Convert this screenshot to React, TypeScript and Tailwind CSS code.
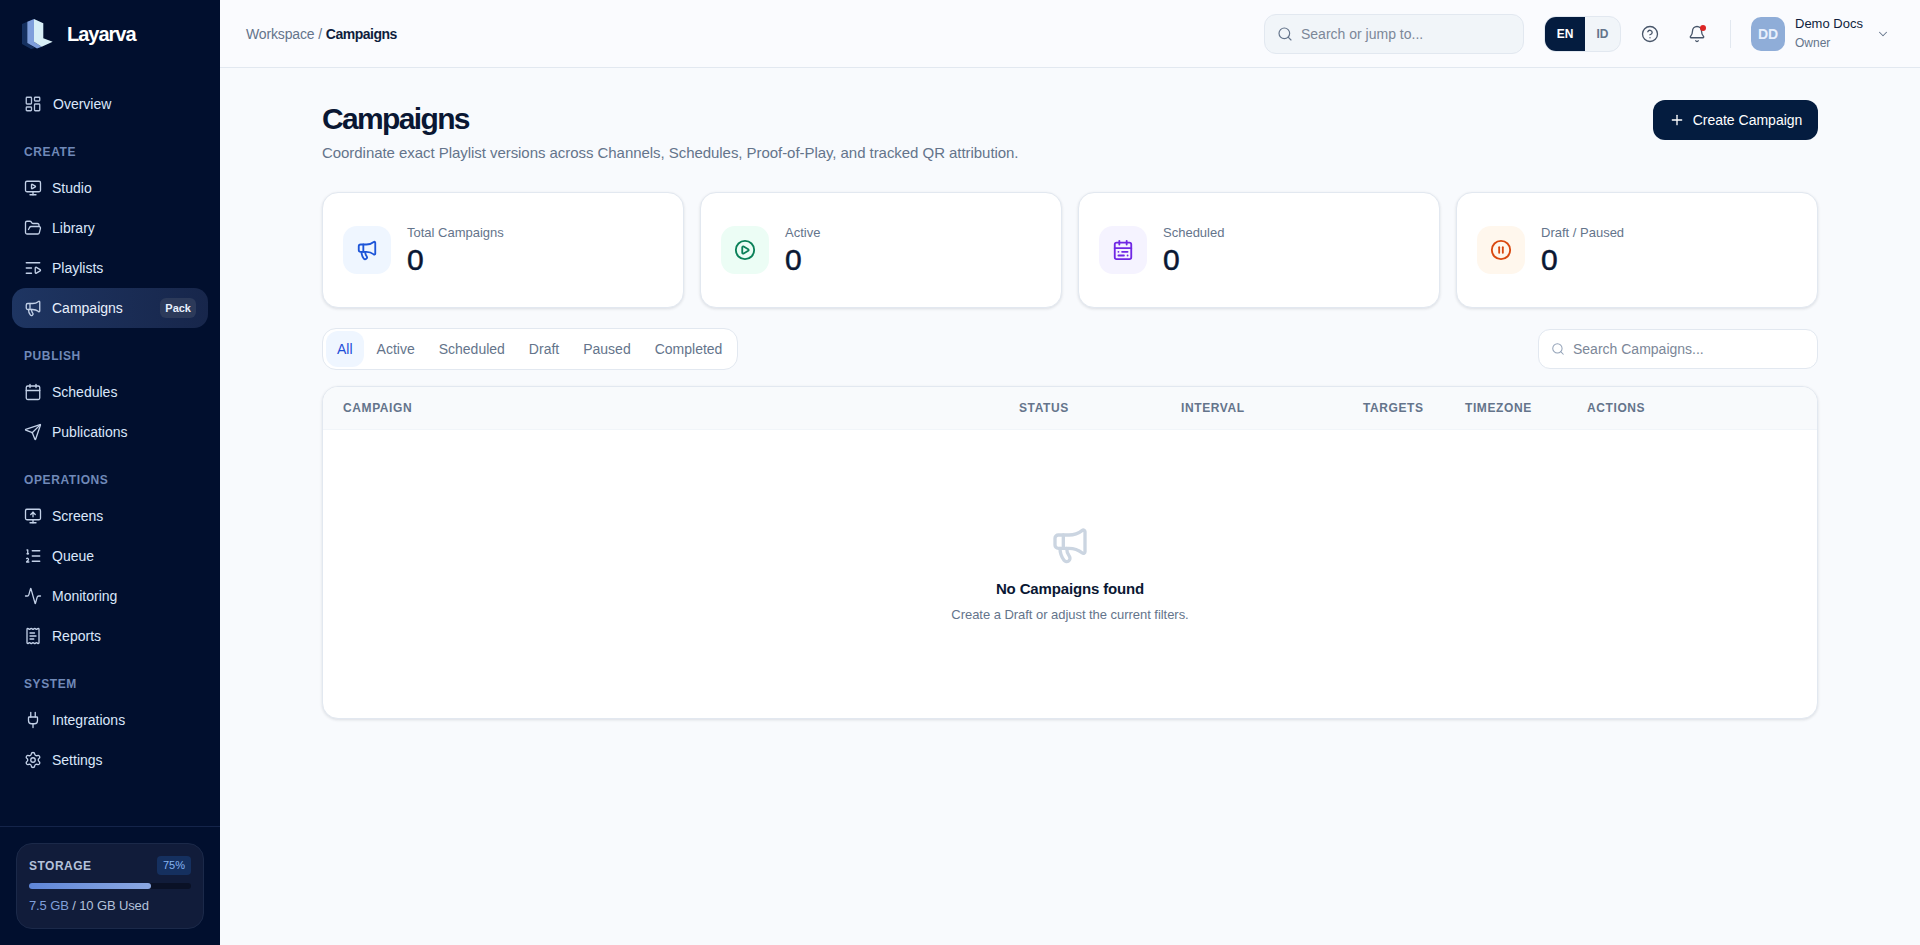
import React from 'react';
import {
  Activity,
  Bell,
  CalendarRange,
  Calendar,
  ChevronDown,
  CircleHelp,
  CirclePause,
  CirclePlay,
  FolderOpen,
  LayoutDashboard,
  ListOrdered,
  ListVideo,
  Megaphone,
  MonitorPlay,
  MonitorUp,
  Plug,
  Plus,
  ReceiptText,
  Search,
  Send,
  Settings,
} from 'lucide-react';

const navGroups = [
  {
    label: 'CREATE',
    items: [
      { name: 'Studio', icon: MonitorPlay },
      { name: 'Library', icon: FolderOpen },
      { name: 'Playlists', icon: ListVideo },
      { name: 'Campaigns', icon: Megaphone, active: true },
    ],
  },
  {
    label: 'PUBLISH',
    items: [
      { name: 'Schedules', icon: Calendar },
      { name: 'Publications', icon: Send },
    ],
  },
  {
    label: 'OPERATIONS',
    items: [
      { name: 'Screens', icon: MonitorUp },
      { name: 'Queue', icon: ListOrdered },
      { name: 'Monitoring', icon: Activity },
      { name: 'Reports', icon: ReceiptText },
    ],
  },
  {
    label: 'SYSTEM',
    items: [
      { name: 'Integrations', icon: Plug },
      { name: 'Settings', icon: Settings },
    ],
  },
];

const stats = [
  { label: 'Total Campaigns', icon: Megaphone, box: 'bg-[#eff6ff]', color: 'text-[#1d55d8]' },
  { label: 'Active', icon: CirclePlay, box: 'bg-[#ecfdf5]', color: 'text-[#0a8058]' },
  { label: 'Scheduled', icon: CalendarRange, box: 'bg-[#f5f3ff]', color: 'text-[#7028e4]' },
  { label: 'Draft / Paused', icon: CirclePause, box: 'bg-[#fff7ed]', color: 'text-[#d9480f]' },
];

const tabs = ['Active', 'Scheduled', 'Draft', 'Paused', 'Completed'];
const columns = ['CAMPAIGN', 'STATUS', 'INTERVAL', 'TARGETS', 'TIMEZONE', 'ACTIONS'];

function Logo() {
  return (
    <svg width="32" height="32" viewBox="0 0 32 32" className="shrink-0">
      <polygon points="0,6 5.3,3.7 5.3,25 13,30 9,31 0,26" fill="#15305f" />
      <polygon points="5.3,3.7 12,1 12,23.7 19.7,28.7 15,30.5 5.3,25" fill="#7f9fdc" />
      <polygon points="12,1 21.3,5.3 21.3,20.3 30.7,23.7 19.7,28.7 12,23.7" fill="#d8eff7" />
    </svg>
  );
}

function Sidebar() {
  return (
    <aside className="flex h-full w-[220px] shrink-0 flex-col bg-[#010f2e]">
      <div className="flex h-[68px] items-center gap-[13px] pl-[22px]">
        <Logo />
        <span className="text-[20px] font-bold tracking-[-0.05em] text-white">Layarva</span>
      </div>
      <nav className="flex flex-col px-3 pt-4">
        <a className="flex h-10 items-center gap-[11px] pl-3 text-sm text-[#dbe7fb]">
          <LayoutDashboard size={18} strokeWidth={1.75} className="text-[#b8c6de]" />
          Overview
        </a>
        {navGroups.map(group => (
          <div key={group.label}>
            <div className="h-11 pl-3 pt-5 pb-2 text-xs leading-4 font-bold tracking-[0.05em] text-[#7089b8]">
              {group.label}
            </div>
            {group.items.map(item => (
              <a
                key={item.name}
                className={
                  item.active
                    ? 'flex h-10 items-center gap-[10px] rounded-[14px] bg-gradient-to-r from-[#1e3562] to-[#17264b] pl-3 pr-3 text-sm text-[#e8f0fd]'
                    : 'flex h-10 items-center gap-[10px] pl-3 pr-3 text-sm text-[#dbe7fb]'
                }
              >
                <item.icon size={18} strokeWidth={1.75} className="text-[#c3d1e8]" />
                {item.name}
                {item.active && (
                  <span className="ml-auto rounded-md bg-[#2c3a5a] px-[5px] py-[3px] text-[11px] leading-[14px] font-bold text-[#e8f0fd]">
                    Pack
                  </span>
                )}
              </a>
            ))}
          </div>
        ))}
      </nav>
      <div className="mt-auto border-t border-[#14244a] px-4 pt-4 pb-[16px]">
        <div className="h-[86px] rounded-2xl border border-[#1b2949] bg-[#111c3a] px-3 pt-3">
          <div className="flex items-center justify-between">
            <span className="text-xs font-bold tracking-[0.04em] text-[#b4c2da]">STORAGE</span>
            <span className="rounded bg-[#15305f] px-[6px] py-[2px] text-[11px] leading-[15px] text-[#86b4f2]">75%</span>
          </div>
          <div className="mt-2 h-[6px] rounded-full bg-[#0a1126]">
            <div className="h-full w-3/4 rounded-full bg-gradient-to-r from-[#5f86d8] to-[#8ca8e2]" />
          </div>
          <div className="mt-[9px] text-[13px] leading-4 tracking-[-0.12px] text-[#b4c2da]">
            <span className="text-[#7f9fdc]">7.5 GB</span> / 10 GB Used
          </div>
        </div>
      </div>
    </aside>
  );
}

function Header() {
  return (
    <header className="flex h-[68px] shrink-0 items-center border-b border-[#e2e8f0] bg-[#fafbfe] pl-[26px] pr-[30px]">
      <div className="text-sm tracking-[-0.01em] text-[#64748b]">
        Workspace / <span className="font-bold tracking-[-0.035em] text-[#0f1e3d]">Campaigns</span>
      </div>
      <div className="ml-auto flex items-center">
        <div className="flex h-10 w-[260px] items-center gap-2 rounded-xl border border-[#e2e8f0] bg-[#f1f5f9] px-3">
          <Search size={16} strokeWidth={1.75} className="text-[#64748b]" />
          <span className="text-sm text-[#7c8798]">Search or jump to...</span>
        </div>
        <div className="ml-5 flex h-9 w-[77px] overflow-hidden rounded-xl border border-[#e2e8f0] bg-[#f1f5f9] text-xs font-bold">
          <span className="flex w-10 items-center justify-center bg-[#041c3f] text-white">EN</span>
          <span className="flex flex-1 items-center justify-center text-[#64748b]">ID</span>
        </div>
        <CircleHelp size={18} strokeWidth={1.75} className="ml-[20px] text-[#475569]" />
        <div className="relative ml-[29px]">
          <Bell size={18} strokeWidth={1.75} className="text-[#475569]" />
          <span className="absolute right-0 top-0 h-[6px] w-[6px] rounded-full bg-[#dc2626]" />
        </div>
        <div className="ml-[24px] h-7 w-px bg-[#e2e8f0]" />
        <div className="ml-5 flex h-[34px] w-[34px] items-center justify-center rounded-[10px] bg-[#8fadd8] text-sm font-bold text-[#e8f0fd]">
          DD
        </div>
        <div className="ml-[10px] w-[81px]">
          <div className="text-[13px] leading-[19px] font-medium text-[#0f1e3d]">Demo Docs</div>
          <div className="text-xs leading-[21px] font-medium text-[#64748b]">Owner</div>
        </div>
        <ChevronDown size={14} strokeWidth={1.75} className="text-[#64748b]" />
      </div>
    </header>
  );
}

export default function App() {
  return (
    <div className="flex h-screen overflow-hidden bg-[#f8fafd] font-['Liberation_Sans',Arial,sans-serif]">
      <Sidebar />
      <div className="flex min-w-0 flex-1 flex-col">
        <Header />
        <main className="flex-1 px-[102px]">
          <div className="flex items-start justify-between pt-8">
            <div>
              <h1 className="mt-[1px] text-[30px] leading-9 font-bold tracking-[-0.055em] text-[#0a1733]">Campaigns</h1>
              <p className="mt-[6px] text-[15px] leading-5 tracking-[-0.05px] text-[#64748b]">
                Coordinate exact Playlist versions across Channels, Schedules, Proof-of-Play, and tracked QR attribution.
              </p>
            </div>
            <button className="flex h-10 w-[165px] items-center justify-center gap-2 rounded-xl bg-[#041c3f] text-sm font-medium text-white">
              <Plus size={16} strokeWidth={2} />
              Create Campaign
            </button>
          </div>

          <div className="mt-[29px] grid grid-cols-4 gap-4">
            {stats.map(stat => (
              <div
                key={stat.label}
                className="flex h-[116px] items-center gap-4 rounded-2xl border border-[#e2e8f0] bg-white pl-5 shadow-[0_1px_3px_rgba(15,23,42,0.12)]"
              >
                <div className={`flex h-12 w-12 items-center justify-center rounded-[14px] ${stat.box}`}>
                  <stat.icon size={22} strokeWidth={2} className={stat.color} />
                </div>
                <div className="pt-[1px]">
                  <div className="text-[13px] leading-[18px] text-[#64748b]">{stat.label}</div>
                  <div className="text-[30px] leading-9 [-webkit-text-stroke:0.5px_#0a1733] text-[#0a1733]">0</div>
                </div>
              </div>
            ))}
          </div>

          <div className="mt-[20px] flex items-center justify-between">
            <div className="flex h-[42px] items-center rounded-[14px] border border-[#e2e8f0] bg-white p-[3px] text-sm text-[#64748b]">
              <span className="mr-[1px] flex h-9 items-center rounded-xl bg-[#eff6ff] px-[11px] text-[#1d4ed8]">All</span>
              {tabs.map(tab => (
                <span key={tab} className="flex h-9 items-center px-3">
                  {tab}
                </span>
              ))}
            </div>
            <div className="flex h-10 w-[280px] items-center gap-2 rounded-xl border border-[#e2e8f0] bg-white px-3">
              <Search size={14} strokeWidth={1.75} className="text-[#94a3b8]" />
              <span className="text-sm text-[#7c8798]">Search Campaigns...</span>
            </div>
          </div>

          <div className="mt-[16px] overflow-hidden rounded-2xl border border-[#e2e8f0] bg-white shadow-[0_1px_3px_rgba(15,23,42,0.12)]">
            <div className="grid h-[43px] grid-cols-[676px_162px_182px_102px_122px_1fr] items-center border-b border-[#f1f5f9] bg-[#f8fafc] pl-5 text-xs font-bold tracking-[0.05em] text-[#64748b]">
              {columns.map(col => (
                <div key={col}>{col}</div>
              ))}
            </div>
            <div className="flex h-[288px] flex-col items-center pt-[95px]">
              <Megaphone size={40} strokeWidth={2} className="text-[#cbd5e1]" />
              <div className="mt-[12px] text-[15px] leading-6 font-bold tracking-[-0.01em] text-[#0a1733]">No Campaigns found</div>
              <div className="mt-[6px] text-[13px] leading-4 tracking-[-0.04px] text-[#64748b]">Create a Draft or adjust the current filters.</div>
            </div>
          </div>
        </main>
      </div>
    </div>
  );
}
